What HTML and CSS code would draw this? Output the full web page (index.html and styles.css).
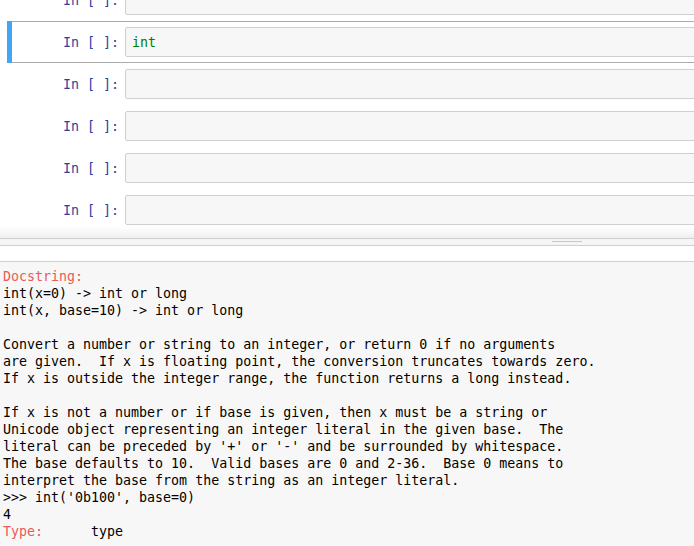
FILE: index.html
```html
<!DOCTYPE html>
<html>
<head>
<meta charset="utf-8">
<link rel="stylesheet" href="styles.css">
</head>
<body>
<div class="notebook">
  <div class="cells">
    <div class="cell"><div class="prompt">In [ ]:</div><div class="input"></div></div>
    <div class="cell selected"><div class="prompt">In [ ]:</div><div class="input"><span class="kw">int</span></div></div>
    <div class="cell"><div class="prompt">In [ ]:</div><div class="input"></div></div>
    <div class="cell"><div class="prompt">In [ ]:</div><div class="input"></div></div>
    <div class="cell"><div class="prompt">In [ ]:</div><div class="input"></div></div>
    <div class="cell"><div class="prompt">In [ ]:</div><div class="input"></div></div>
  </div>
</div>
<div class="divider"><div class="handle"></div></div>
<div class="gap"></div>
<div class="pager"><pre class="doc"><span class="red">Docstring:</span>
int(x=0) -&gt; int or long
int(x, base=10) -&gt; int or long

Convert a number or string to an integer, or return 0 if no arguments
are given.  If x is floating point, the conversion truncates towards zero.
If x is outside the integer range, the function returns a long instead.

If x is not a number or if base is given, then x must be a string or
Unicode object representing an integer literal in the given base.  The
literal can be preceded by '+' or '-' and be surrounded by whitespace.
The base defaults to 10.  Valid bases are 0 and 2-36.  Base 0 means to
interpret the base from the string as an integer literal.
&gt;&gt;&gt; int('0b100', base=0)
4
<span class="red">Type:</span>      type</pre></div>
</body>
</html>
```
FILE: styles.css
```css
html, body {
  margin: 0;
  padding: 0;
  width: 694px;
  height: 546px;
  overflow: hidden;
  background: #fff;
  font-family: "DejaVu Sans Mono", monospace;
  font-size: 13.3px;
  color: #000;
}
.notebook {
  height: 238px;
  overflow: hidden;
  padding-left: 7px;
  background: linear-gradient(to bottom, #ffffff 0, #ffffff 225px, #fbfbfb 230px, #eeeeee 238px);
}
.cells {
  margin-top: -21px;
  margin-right: -40px;
}
.cell {
  display: flex;
  align-items: center;
  height: 30px;
  padding: 5px;
  border: 1px solid transparent;
  position: relative;
}
.cell.selected {
  border-color: #ababab;
}
.cell.selected::before {
  content: "";
  position: absolute;
  left: -1px;
  top: -1px;
  bottom: -1px;
  width: 5px;
  background: #42a5f5;
}
.prompt {
  width: 106px;
  flex: none;
  text-align: right;
  padding-right: 6px;
  color: #303f9f;
  line-height: 17px;
}
.input {
  flex: 1;
  height: 28px;
  border: 1px solid #cfcfcf;
  border-radius: 2px;
  background: #f7f7f7;
  display: flex;
  align-items: center;
  padding-left: 6px;
  line-height: 17px;
}
.kw {
  color: #008000;
}
.divider {
  height: 6px;
  border-top: 1px solid #cfcfcf;
  border-bottom: 1px solid #cfcfcf;
  background: #f5f5f5;
  display: flex;
  align-items: center;
  padding-left: 552px;
}
.handle {
  width: 30px;
  height: 1px;
  background: #c8c8c8;
  margin-top: -1px;
}
.gap {
  height: 15px;
  border-bottom: 1px solid #cfcfcf;
  background: #fff;
}
.pager {
  background: #f7f7f7;
  height: 300px;
  padding: 6px 0 0 3px;
}
.doc {
  margin: 0;
  font-family: "DejaVu Sans Mono", monospace;
  font-size: 13.3px;
  line-height: 17px;
  color: #000;
}
.red {
  color: #e75c58;
}
```
